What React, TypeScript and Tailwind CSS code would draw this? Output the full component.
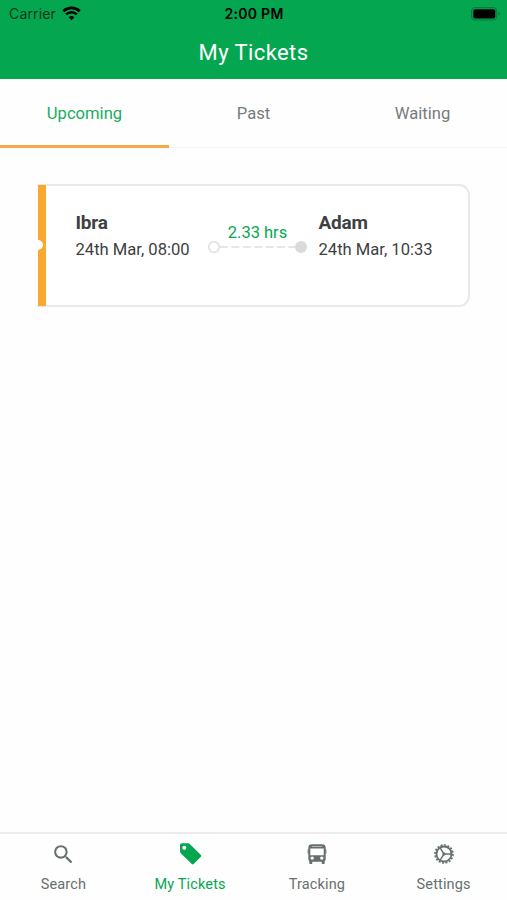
import React from 'react';
import { MdSearch } from 'react-icons/md';

const TagIcon: React.FC = () => (
  <svg className="h-6 w-6" viewBox="0 0 24 24" fill="currentColor">
    <path
      fillRule="evenodd"
      d="M2 3.2Q2 1.2 4 1.2H10.2Q11.1 1.2 11.8 1.9L22.9 12.9Q23.8 13.8 22.9 14.7L15.6 22Q14.7 22.9 13.8 22L2.7 11.2Q2 10.5 2 9.6ZM6.3 3.8a2 2 0 1 0 0 4a2 2 0 1 0 0-4Z"
    />
  </svg>
);

const BusIcon: React.FC = () => (
  <svg className="h-6 w-6" viewBox="0 0 24 24" fill="currentColor">
    <path
      fillRule="evenodd"
      d="M7 2.2h10c2.3 0 3.7 1.1 3.7 3.4v11.5c0 .9-.4 1.6-1 2.1v1.7c0 .6-.4 1-1 1h-1c-.6 0-1-.4-1-1v-1.2H7.3v1.2c0 .6-.4 1-1 1h-1c-.6 0-1-.4-1-1v-1.7c-.6-.5-1-1.2-1-2.1V5.6c0-2.3 1.4-3.4 3.7-3.4ZM7 4v.6h10V4ZM5.3 6.4v6.8h13.4V6.4ZM7.2 14.4a1.7 1.7 0 1 0 0 3.4a1.7 1.7 0 1 0 0-3.4ZM16.8 14.4a1.7 1.7 0 1 0 0 3.4a1.7 1.7 0 1 0 0-3.4Z"
    />
    <path d="M2.6 7.5h1v4h-1ZM20.4 7.5h1v4h-1Z" />
  </svg>
);

const SettingsIcon: React.FC = () => (
  <svg className="h-6 w-6" viewBox="0 0 24 24" fill="none" stroke="currentColor">
    <circle cx="12" cy="12" r="7.5" strokeWidth="1.8" />
    <circle cx="12" cy="12" r="9" strokeWidth="1.6" pathLength="36" strokeDasharray="1.3 0.95" />
    <path d="M12 12h7.5M12 12 8 5.7M12 12 8 18.3" strokeWidth="1.4" />
    <circle cx="12" cy="12" r="1.2" strokeWidth="1" />
  </svg>
);

const tabs = ['Upcoming', 'Past', 'Waiting'];

const navItems = [
  { label: 'Search', icon: <MdSearch className="mt-px ml-px h-[25px] w-[25px]" /> },
  { label: 'My Tickets', icon: <TagIcon /> },
  { label: 'Tracking', icon: <BusIcon /> },
  { label: 'Settings', icon: <SettingsIcon /> },
];

const StatusBar: React.FC = () => (
  <div className="grid h-[27px] grid-cols-3 items-center pl-[9px] pr-[6px] font-['Inter',sans-serif] text-black">
    <div className="flex items-center gap-[6px]">
      <span className="text-[14px] tracking-[0.15px] text-[#06351b]">Carrier</span>
      <svg className="h-[15px] w-[19px]" viewBox="0 0 19 15" fill="none">
        <path d="M1.3 5.2a11.8 11.8 0 0 1 16.4 0" stroke="currentColor" strokeWidth="2.8" />
        <path d="M4.1 8.4a7.7 7.7 0 0 1 10.8 0" stroke="currentColor" strokeWidth="2.5" />
        <path d="M6.7 11.3a4 4 0 0 1 5.6 0L9.5 14.2z" fill="currentColor" />
      </svg>
    </div>
    <span className="-ml-[2px] text-center text-[14px] font-semibold tracking-[0.3px]">2:00 PM</span>
    <svg className="h-[14px] w-[30px] justify-self-end" viewBox="0 0 30 14" fill="none">
      <rect x="0.6" y="0.6" width="25" height="12.4" rx="3.6" stroke="#087a3b" strokeWidth="1.2" />
      <rect x="2.3" y="2.3" width="22" height="9.2" rx="2" fill="currentColor" />
      <path d="M27.4 4.8c2 .8 2 3.2 0 4z" fill="#087a3b" />
    </svg>
  </div>
);

const TicketCard: React.FC = () => (
  <div className="relative mx-[37px] mt-9 flex h-[123px] rounded-r-[11px] border-2 border-l-0 border-[#e9e9e9] bg-white text-[#3e4143]">
    {/* Coloured edge with the punched notch */}
    <div className="absolute -top-px -bottom-px left-px w-2 overflow-hidden bg-[#faa831]">
      <div className="absolute top-[55px] -left-[5px] h-[10px] w-[10px] rounded-full bg-white" />
    </div>
    <div className="w-[133px] pt-6 pl-[38.5px] whitespace-nowrap">
      <h3 className="text-[19px] leading-[25px] font-bold tracking-[-0.25px]">Ibra</h3>
      <p className="text-[16.6px] leading-[30px]">24th Mar, 08:00</p>
    </div>
    <div className="ml-[37px] w-[101px] pt-9 text-[#06a752]">
      <p className="h-[18px] text-center text-[16.5px] leading-[22px]">2.33 hrs</p>
      <svg className="h-[14px] w-[101px]" viewBox="0 0 101 14" fill="none">
        <path d="M13 7H88" stroke="#dedede" strokeWidth="1.4" strokeDasharray="8 3.4" />
        <circle cx="7" cy="7" r="5.3" fill="white" stroke="#dedede" strokeWidth="1.5" />
        <circle cx="94" cy="7" r="6" fill="#dadada" />
      </svg>
    </div>
    <div className="pt-6 pl-[10.5px] whitespace-nowrap">
      <h3 className="text-[19px] leading-[25px] font-bold tracking-[-0.25px]">Adam</h3>
      <p className="text-[16.6px] leading-[30px]">24th Mar, 10:33</p>
    </div>
  </div>
);

const App: React.FC = () => {
  return (
    <div className="flex h-screen flex-col bg-[#fefefe] font-['Roboto',sans-serif]">
      {/* Header */}
      <header className="h-[79px] shrink-0 bg-[#05a650]">
        <StatusBar />
        <h1 className="text-center text-[22px] leading-[52px] tracking-[0.4px] text-white">My Tickets</h1>
      </header>

      {/* Tabs */}
      <div className="grid h-[69px] shrink-0 grid-cols-3 border-b border-[#f7f7f7]">
        {tabs.map((tab, index) => (
          <button
            key={tab}
            className={
              index === 0
                ? 'relative flex items-center justify-center pt-[2px] text-[16.6px] text-[#19ad5d]'
                : 'relative flex items-center justify-center pt-[2px] text-[16.6px] text-[#757b7d]'
            }
          >
            {tab}
            {index === 0 && <span className="absolute inset-x-0 -bottom-px h-[3px] bg-[#f5a846]" />}
          </button>
        ))}
      </div>

      {/* Tickets */}
      <main className="flex-1">
        <TicketCard />
      </main>

      {/* Bottom navigation */}
      <nav className="grid h-[68px] shrink-0 grid-cols-4 border-t-2 border-[#ececec]">
        {navItems.map((item, index) => (
          <button
            key={item.label}
            className={
              index === 1
                ? 'flex flex-col items-center text-[#06a650]'
                : 'flex flex-col items-center text-[#66716d]'
            }
          >
            <span className="mt-[6px] flex h-[27px] items-center">{item.icon}</span>
            <span className="mt-[8px] text-[14.5px] leading-5 tracking-[0.15px]">{item.label}</span>
          </button>
        ))}
      </nav>
    </div>
  );
};

export default App;
